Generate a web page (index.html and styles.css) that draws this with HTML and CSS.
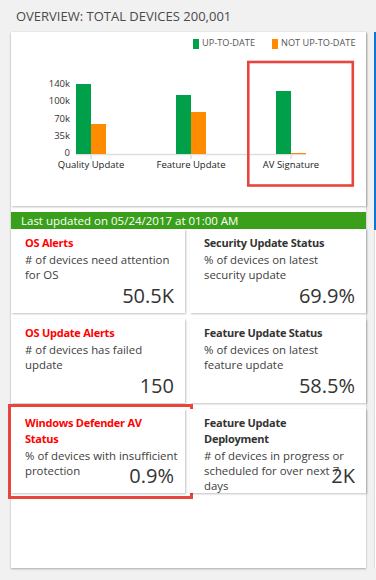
FILE: index.html
```html
<!DOCTYPE html>
<html>
<head>
<meta charset="utf-8">
<link rel="stylesheet" href="styles.css">
</head>
<body>
<div class="page">
  <div class="main">
    <h1 class="title">OVERVIEW: TOTAL DEVICES 200,001</h1>
    <div class="panel">
      <div class="chart-card">
        <svg class="chart" width="355" height="174" viewBox="0 0 355 174">
          <rect x="182" y="7" width="6" height="10" fill="#00a04b"/>
          <text class="legend" x="191" y="14">UP-TO-DATE</text>
          <rect x="261" y="7" width="6" height="10" fill="#ff8c00"/>
          <text class="legend" x="270" y="14">NOT UP-TO-DATE</text>

          <text class="ylab" x="59" y="55">140k</text>
          <text class="ylab" x="59" y="72">100k</text>
          <text class="ylab" x="59" y="90">70k</text>
          <text class="ylab" x="59" y="107">35k</text>
          <text class="ylab" x="59" y="124">0</text>

          <line x1="65" y1="122.5" x2="295" y2="122.5" stroke="#dedede" stroke-width="1.5"/>
          <line x1="80" y1="122" x2="80" y2="127" stroke="#dedede" stroke-width="1.5"/>
          <line x1="180" y1="122" x2="180" y2="127" stroke="#dedede" stroke-width="1.5"/>
          <line x1="280" y1="122" x2="280" y2="127" stroke="#dedede" stroke-width="1.5"/>

          <rect x="65" y="52" width="15" height="70" fill="#00a04b"/>
          <rect x="80" y="92" width="15" height="30" fill="#ff8c00"/>
          <rect x="165" y="63" width="15" height="59" fill="#00a04b"/>
          <rect x="180" y="80" width="15" height="42" fill="#ff8c00"/>
          <rect x="265" y="59" width="15" height="63" fill="#00a04b"/>
          <rect x="280" y="121" width="15" height="1" fill="#ff8c00"/>

          <text class="xlab" x="80" y="136">Quality Update</text>
          <text class="xlab" x="180" y="136">Feature Update</text>
          <text class="xlab" x="280" y="136">AV Signature</text>

          <rect x="237.3" y="30" width="104.5" height="123.5" fill="none" stroke="#e8453e" stroke-width="2.6"/>
        </svg>
      </div>
      <div class="banner">Last updated on 05/24/2017 at 01:00 AM</div>
      <div class="tiles">
        <div class="tile">
          <div class="tile-title alert">OS Alerts</div>
          <div class="tile-desc"># of devices need attention for OS</div>
          <div class="tile-value">50.5K</div>
        </div>
        <div class="tile">
          <div class="tile-title">Security Update Status</div>
          <div class="tile-desc">% of devices on latest security update</div>
          <div class="tile-value">69.9%</div>
        </div>
        <div class="tile">
          <div class="tile-title alert">OS Update Alerts</div>
          <div class="tile-desc"># of devices has failed update</div>
          <div class="tile-value">150</div>
        </div>
        <div class="tile">
          <div class="tile-title">Feature Update Status</div>
          <div class="tile-desc">% of devices on latest feature update</div>
          <div class="tile-value">58.5%</div>
        </div>
        <div class="tile">
          <div class="tile-title alert">Windows Defender AV Status</div>
          <div class="tile-desc">% of devices with insufficient protection</div>
          <div class="tile-value">0.9%</div>
          <div class="highlight"></div>
        </div>
        <div class="tile">
          <div class="tile-title">Feature Update Deployment</div>
          <div class="tile-desc"># of devices in progress or scheduled for over next 7 days</div>
          <div class="tile-value">2K</div>
        </div>
      </div>
    </div>
  </div>
  <div class="peek"><div class="peek-accent"></div></div>
</div>
</body>
</html>
```

FILE: styles.css
```css
* { box-sizing: border-box; }

html, body {
  margin: 0;
  padding: 0;
  background: #f1f1f1;
  font-family: "Open Sans", "Noto Sans", sans-serif;
  color: #333;
}

.page {
  display: flex;
  padding-left: 11px;
  gap: 8px;
  width: 376px;
  height: 580px;
  overflow: hidden;
}

.main {
  width: 355px;
  flex: none;
}

.title {
  margin: 0;
  height: 32px;
  padding-left: 5px;
  line-height: 32px;
  font-size: 13px;
  font-weight: normal;
  color: #4a4a4a;
  white-space: nowrap;
}

.panel {
  background: #fff;
  height: 536px;
  box-shadow: 0 1px 2px rgba(0, 0, 0, 0.3);
}

.chart-card {
  height: 174px;
  background: #fff;
  box-shadow: 1px 1px 2px rgba(0, 0, 0, 0.28);
}

.chart {
  display: block;
}

.chart text {
  font-family: "Open Sans", "Noto Sans", sans-serif;
}

.chart .legend {
  font-size: 9.2px;
  fill: #555;
}

.chart .ylab {
  font-size: 9.5px;
  fill: #333;
  text-anchor: end;
}

.chart .xlab {
  font-size: 9.5px;
  fill: #222;
  text-anchor: middle;
}

.banner {
  margin-top: 6px;
  height: 17px;
  background: #3a9f1a;
  color: #fff;
  font-size: 11.5px;
  line-height: 17px;
  padding-left: 10px;
  white-space: nowrap;
}

.tiles {
  display: grid;
  grid-template-columns: 174px 176px;
  grid-template-rows: 84px 84px 84px;
  column-gap: 5px;
  row-gap: 6px;
}

.tile {
  position: relative;
  background: #fff;
  padding: 6px 7px 0 14px;
  box-shadow: 1px 1px 2px rgba(0, 0, 0, 0.25);
}

.tile-title {
  font-size: 11px;
  line-height: 16px;
  font-weight: bold;
  letter-spacing: -0.25px;
  color: #333;
  padding-right: 12px;
}

.tile-title.alert {
  color: #f00;
}

.tile-desc {
  margin-top: 1px;
  font-size: 11.4px;
  line-height: 15px;
  color: #404040;
}

.tile-value {
  position: absolute;
  right: 11px;
  bottom: 7px;
  font-size: 20px;
  line-height: 20px;
  color: #333;
}

.highlight {
  position: absolute;
  left: -3px;
  top: -5px;
  right: -8px;
  bottom: -6px;
  border: 3px solid #e8453e;
}

.peek {
  margin-top: 32px;
  width: 4px;
  height: 536px;
  background: #fff;
  border-left: 1px solid #ddd;
  flex: none;
}

.peek-accent {
  margin-left: -1px;
  width: 3px;
  height: 198px;
  background: #0a78d4;
}
```
